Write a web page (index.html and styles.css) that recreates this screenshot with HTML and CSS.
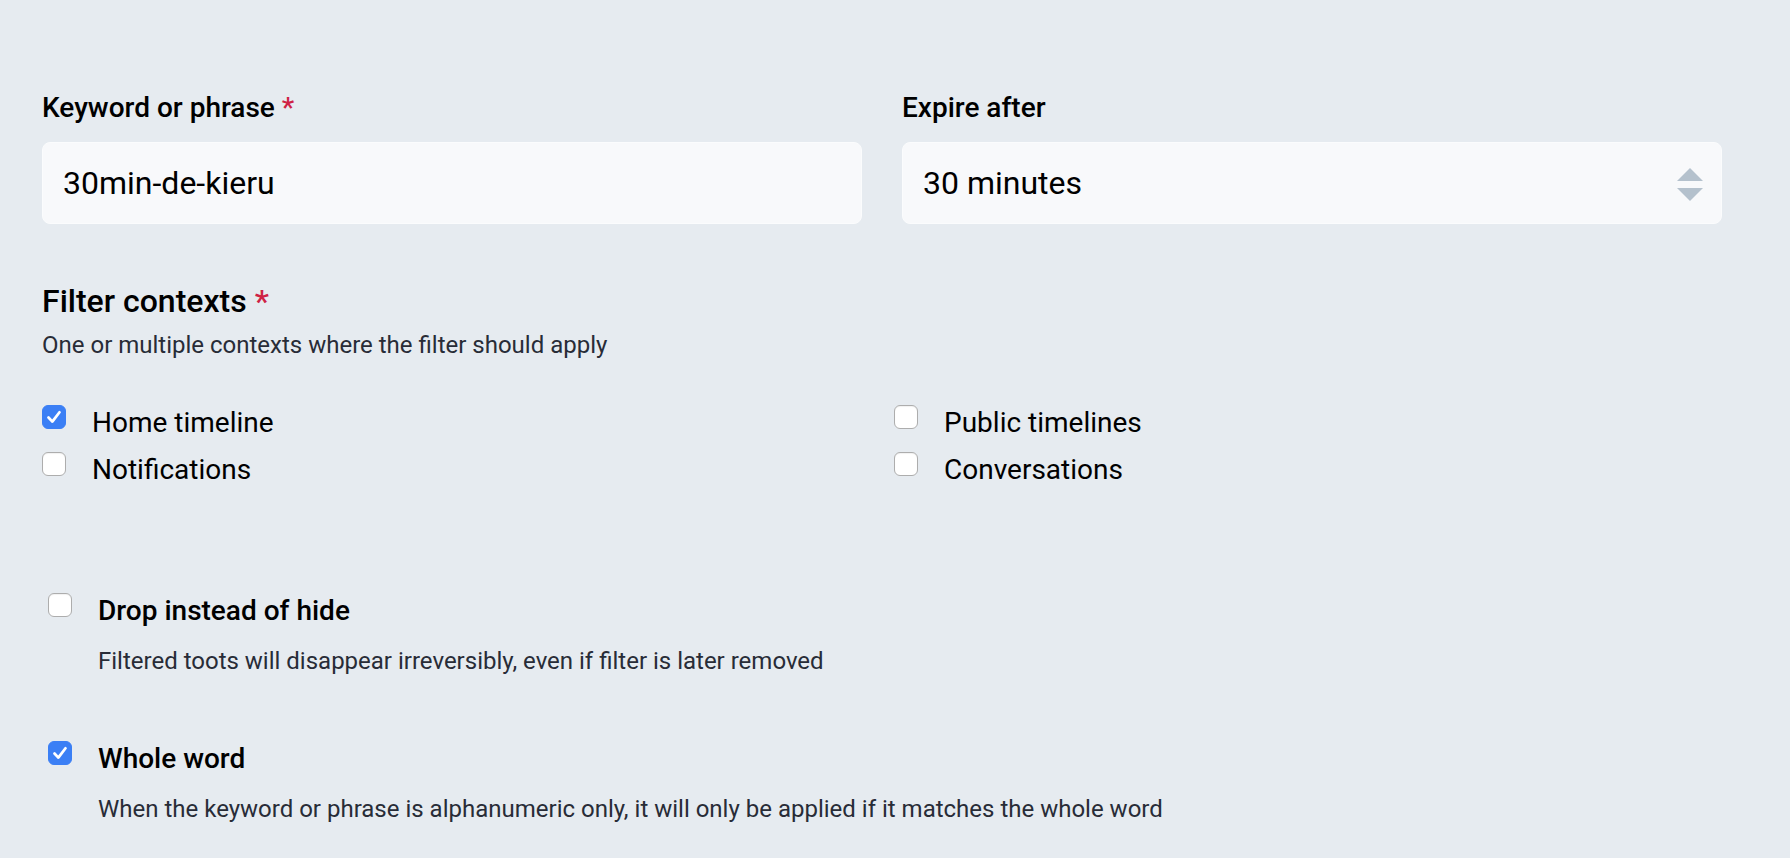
FILE: index.html
```html
<!DOCTYPE html>
<html lang="en">
<head>
<meta charset="utf-8">
<title>Filter</title>
<link rel="stylesheet" href="styles.css">
</head>
<body>
<form class="page">
  <div class="inputs-row">
    <div class="field">
      <label class="label">Keyword or phrase <abbr class="req">*</abbr></label>
      <div class="text-input">30min-de-kieru</div>
    </div>
    <div class="field">
      <label class="label">Expire after</label>
      <div class="text-input select">
        <span>30 minutes</span>
        <svg class="arrows" width="26" height="33" viewBox="0 0 26 33"><polygon points="0,13 13,0 26,13" fill="#b4c1cd"/><polygon points="0,20 26,20 13,33" fill="#b4c1cd"/></svg>
      </div>
    </div>
  </div>

  <h3 class="section-title">Filter contexts <abbr class="req">*</abbr></h3>
  <p class="hint">One or multiple contexts where the filter should apply</p>

  <div class="context-grid">
    <div class="check-row">
      <span class="cb checked"><svg width="24" height="24" viewBox="0 0 24 24"><path d="M6 12.6 L10.2 17 L18 6.8" fill="none" stroke="#fff" stroke-width="3" stroke-linecap="round" stroke-linejoin="round"/></svg></span>
      <span class="check-label">Home timeline</span>
    </div>
    <div class="check-row">
      <span class="cb"></span>
      <span class="check-label">Public timelines</span>
    </div>
    <div class="check-row">
      <span class="cb"></span>
      <span class="check-label">Notifications</span>
    </div>
    <div class="check-row">
      <span class="cb"></span>
      <span class="check-label">Conversations</span>
    </div>
  </div>

  <div class="bool-block first">
    <div class="check-row">
      <span class="cb"></span>
      <span class="bool-label">Drop instead of hide</span>
    </div>
    <p class="hint bool-hint">Filtered toots will disappear irreversibly, even if filter is later removed</p>
  </div>

  <div class="bool-block second">
    <div class="check-row">
      <span class="cb checked"><svg width="24" height="24" viewBox="0 0 24 24"><path d="M6 12.6 L10.2 17 L18 6.8" fill="none" stroke="#fff" stroke-width="3" stroke-linecap="round" stroke-linejoin="round"/></svg></span>
      <span class="bool-label">Whole word</span>
    </div>
    <p class="hint bool-hint">When the keyword or phrase is alphanumeric only, it will only be applied if it matches the whole word</p>
  </div>
</form>
</body>
</html>
```

FILE: styles.css
```css
* { box-sizing: border-box; }

html, body {
  margin: 0;
  padding: 0;
  background: #e6ebf0;
}

body {
  font-family: Roboto, "Liberation Sans", sans-serif;
  color: #000;
  width: 1790px;
  height: 858px;
  overflow: hidden;
}

.page {
  padding: 91px 42px 0 42px;
}

.inputs-row {
  display: grid;
  grid-template-columns: 820px 820px;
  column-gap: 40px;
}

.field {
  display: flex;
  flex-direction: column;
}

.label {
  font-size: 28px;
  line-height: 34px;
  font-weight: 500;
  margin-bottom: 17px;
  color: #000;
}

.req {
  color: #cf2245;
  text-decoration: none;
  border: 0;
  font-weight: 500;
}

.text-input {
  height: 82px;
  background: #f8f9fb;
  border: 1px solid #fbfcfd;
  border-radius: 8px;
  padding: 0 20px;
  font-size: 32px;
  display: flex;
  align-items: center;
  color: #000;
}

.select {
  justify-content: space-between;
  padding-right: 18px;
}

.arrows {
  display: block;
  margin-top: 2px;
}

.section-title {
  margin: 58px 0 0 0;
  font-size: 32px;
  line-height: 38px;
  font-weight: 500;
}

.hint {
  margin: 10px 0 0 0;
  font-size: 24px;
  line-height: 30px;
  color: #282c37;
}

.context-grid {
  margin-top: 45px;
  display: grid;
  grid-template-columns: 852px 1fr;
  row-gap: 13px;
}

.check-row {
  display: flex;
  align-items: flex-start;
  height: 34px;
}

.cb {
  flex: none;
  width: 24px;
  height: 24px;
  border-radius: 6px;
  background: #fff;
  border: 1px solid #adadad;
  box-shadow: inset 0 1px 1px rgba(0, 0, 0, 0.06);
  margin-right: 26px;
  display: flex;
  align-items: center;
  justify-content: center;
}

.cb.checked {
  background: #3b7ff5;
  border-color: #3b7ff5;
  box-shadow: none;
}

.cb svg {
  display: block;
}

.check-label {
  font-size: 28px;
  line-height: 34px;
  color: #000;
  margin-top: 1px;
}

.bool-block {
  padding-left: 6px;
}

.bool-block.first {
  margin-top: 107px;
}

.bool-block.second {
  margin-top: 65px;
}

.bool-label {
  font-size: 28px;
  line-height: 34px;
  font-weight: 500;
  margin-top: 1px;
}

.bool-hint {
  margin: 19px 0 0 50px;
}
```
